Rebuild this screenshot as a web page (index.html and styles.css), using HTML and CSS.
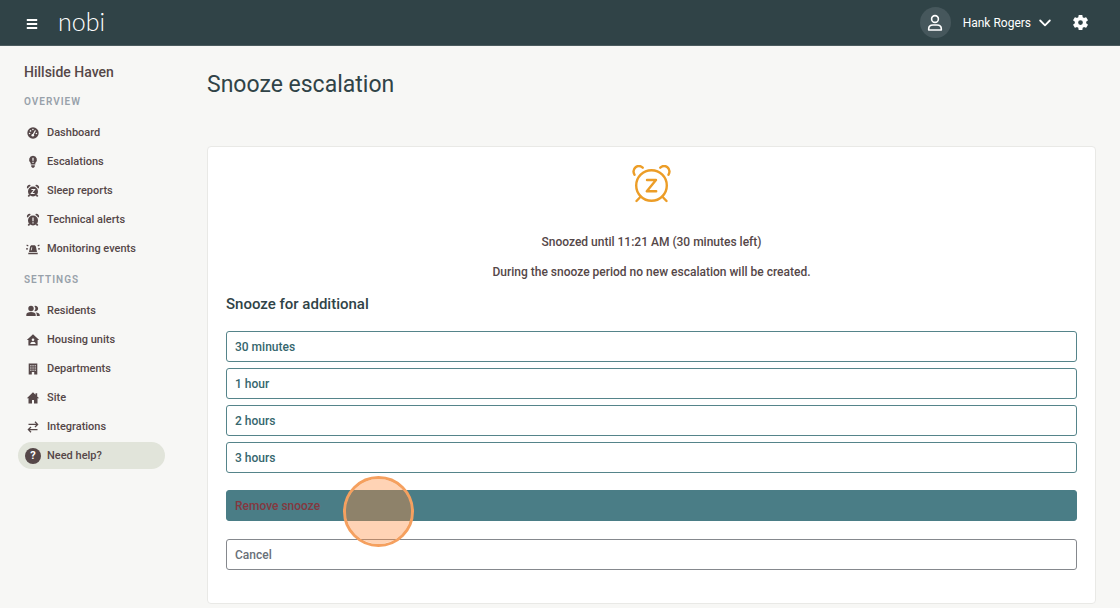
FILE: index.html
```html
<!DOCTYPE html>
<html lang="en">
<head>
<meta charset="utf-8">
<meta name="viewport" content="width=device-width, initial-scale=1">
<title>Snooze escalation – nobi</title>
<link rel="stylesheet" href="styles.css">
</head>
<body>
<header class="topbar">
  <button class="icon-button menu" type="button" aria-label="Menu">
    <svg width="12" height="12" viewBox="0 0 12 12" fill="none" stroke="currentColor" stroke-width="2"><path d="M.8 2h10.400M.8 6h10.400M.8 10h10.400"/></svg>
  </button>
  <a class="logo" href="#">nobi</a>
  <button class="user" type="button">
    <span class="avatar">
      <svg width="16" height="18" viewBox="0 0 16 18" fill="none" stroke="currentColor" stroke-width="1.600" stroke-linejoin="round"><circle cx="8" cy="5" r="3.400"/><path d="M1.700 16v-1.200C1.700 12.300 3.700 11 6 11h4c2.300 0 4.300 1.300 4.300 3.800V16z"/></svg>
    </span>
    <span>Hank Rogers</span>
    <svg class="chevron" width="12" height="8" viewBox="0 0 12 8" fill="none" stroke="currentColor" stroke-width="1.800" stroke-linecap="round" stroke-linejoin="round"><path d="M1.200 1.500 6 6.300l4.800-4.800"/></svg>
  </button>
  <button class="icon-button" type="button" aria-label="Settings">
    <svg width="19" height="19" viewBox="0 0 24 24" fill="currentColor"><path d="M19.140 12.940c.04-.3.06-.61.06-.94s-.02-.64-.07-.94l2.030-1.580a.49.490 0 0 0 .12-.61l-1.920-3.320a.49.490 0 0 0-.59-.22l-2.390.96a7 7 0 0 0-1.620-.94l-.36-2.540a.48.480 0 0 0-.48-.41h-3.840a.48.480 0 0 0-.47.410l-.36 2.540c-.59.240-1.130.570-1.620.940l-2.390-.96a.49.490 0 0 0-.59.220L2.740 8.870a.49.490 0 0 0 .12.610l2.030 1.580a6 6 0 0 0 0 1.880l-2.030 1.580a.49.490 0 0 0-.12.610l1.920 3.320c.12.220.370.290.590.220l2.390-.96c.5.380 1.030.700 1.620.940l.36 2.540c.05.240.240.410.480.410h3.840c.24 0 .44-.17.470-.41l.36-2.540c.59-.24 1.130-.56 1.620-.94l2.390.960c.22.080.470 0 .59-.22l1.920-3.320a.49.490 0 0 0-.12-.61zM12 15a3 3 0 1 1 0-6 3 3 0 0 1 0 6z"/></svg>
  </button>
</header>
<div class="shell">
  <nav class="sidebar" aria-label="Main">
    <p class="site-name">Hillside Haven</p>
    <h2 class="group-title">OVERVIEW</h2>
    <ul class="nav-list">
      <li><a class="nav-link" href="#"><svg class="nav-icon" viewBox="0 0 14 14"><circle cx="7" cy="7" r="5.700" fill="currentColor"/><path d="M7 9 9.200 4.800" stroke="#f7f7f5" stroke-width="1.200" stroke-linecap="round"/><g fill="#f7f7f5"><circle cx="6.800" cy="9.300" r="1.300"/><circle cx="3.600" cy="7.500" r=".8"/><circle cx="4.500" cy="4.900" r=".8"/><circle cx="6.900" cy="3.500" r=".8"/><circle cx="10.400" cy="7.500" r=".8"/></g></svg>Dashboard</a></li>
      <li><a class="nav-link" href="#"><svg class="nav-icon" viewBox="0 0 14 14"><path fill="currentColor" d="M7 .8a4 4 0 0 0-2.300 7.200V9.500h4.600V8A4 4 0 0 0 7 .8zM5.200 10.200h3.600v1.200l-1 1.300H6.200l-1-1.300z"/><path d="M7 2.800v3M7 6.800v1.200" stroke="#f7f7f5" stroke-width="1.200"/></svg>Escalations</a></li>
      <li><a class="nav-link" href="#"><svg class="nav-icon" viewBox="0 0 14 14"><circle cx="7" cy="7.500" r="5" fill="currentColor"/><path d="M1.800 4.200C1.300 2.300 2.800 1.300 4.300 1.900M12.200 4.200C12.700 2.300 11.200 1.300 9.700 1.900M3.500 10.900 2.300 12.600M10.500 10.900 11.700 12.600" fill="none" stroke="currentColor" stroke-width="1.700"/><path d="M5.400 5.500h3.200L5.400 9.500h3.200" fill="none" stroke="#f7f7f5" stroke-width="1.100"/></svg>Sleep reports</a></li>
      <li><a class="nav-link" href="#"><svg class="nav-icon" viewBox="0 0 14 14"><circle cx="7" cy="7.500" r="5" fill="currentColor"/><path d="M1.800 4.200C1.300 2.300 2.800 1.300 4.300 1.900M12.200 4.200C12.700 2.300 11.200 1.300 9.700 1.900M3.500 10.900 2.300 12.600M10.500 10.900 11.700 12.600" fill="none" stroke="currentColor" stroke-width="1.700"/><path d="M7 4.500v3.800M7 9.300v1.300" stroke="#f7f7f5" stroke-width="1.200"/></svg>Technical alerts</a></li>
      <li><a class="nav-link" href="#"><svg class="nav-icon" viewBox="0 0 14 14"><path fill="currentColor" d="M3 10 4 5c.2-1.200.9-1.800 2-1.800h2c1.100 0 1.800.6 2 1.800l1 5zM2.300 10.700h9.400v1.500H2.300z"/><path d="M5.300 8.300l.5-3" stroke="#f7f7f5" stroke-width=".8"/><path d="M.6 3l1.700 1M0 6.800h2M13.400 3l-1.700 1M14 6.800h-2" stroke="currentColor" stroke-width="1.200"/></svg>Monitoring events</a></li>
    </ul>
    <h2 class="group-title">SETTINGS</h2>
    <ul class="nav-list">
      <li><a class="nav-link" href="#"><svg class="nav-icon" viewBox="0 0 14 14" fill="currentColor"><circle cx="5" cy="4.500" r="2.700"/><path d="M.3 12v-1.200C.3 9 2.200 8.100 5 8.100s4.700.9 4.700 2.700V12zM8.300 6.900a3.600 3.600 0 0 0 0-4.900 2.700 2.700 0 1 1 0 4.900zM10.800 12v-1.200c0-1-.4-1.800-1.100-2.400 2.500.1 4 .9 4 2.400V12z"/></svg>Residents</a></li>
      <li><a class="nav-link" href="#"><svg class="nav-icon" viewBox="0 0 14 14"><path fill="currentColor" d="M7 1.200.8 6.900h1.600v5.600h9.200V6.900h1.600z"/><circle cx="7" cy="6.700" r="1.300" fill="#f7f7f5"/><path d="M4.300 11c0-3 5.400-3 5.400 0z" fill="#f7f7f5"/></svg>Housing units</a></li>
      <li><a class="nav-link" href="#"><svg class="nav-icon" viewBox="0 0 14 14"><path fill="currentColor" d="M2.700 1.500h8.600v11H8.200v-2.400H5.800v2.400H2.700z"/><path d="M4.200 3.800h1.300m.9 0h1.300m.9 0h1.300M4.200 6h1.300m.9 0h1.300m.9 0h1.300M4.200 8.200h1.300m.9 0h1.300m.9 0h1.300" stroke="#f7f7f5" stroke-width="1"/></svg>Departments</a></li>
      <li><a class="nav-link" href="#"><svg class="nav-icon" viewBox="0 0 14 14"><path fill="currentColor" d="M7 1.300.8 7.300h1.700v5.200H6V8.900h2v3.600h3.500V7.300h1.700l-2-1.900V2.300H9.500v1.400z"/></svg>Site</a></li>
      <li><a class="nav-link" href="#"><svg class="nav-icon" viewBox="0 0 14 14" fill="none" stroke="currentColor" stroke-width="1.300"><path d="M2.500 4.400h8.500M9 1.800l2.600 2.600L9 7M11.500 9.600H3M5 7 2.400 9.600 5 12.200"/></svg>Integrations</a></li>
      <li><a class="nav-link help" href="#"><span class="help-mark" aria-hidden="true">?</span>Need help?</a></li>
    </ul>
  </nav>
  <main class="content">
    <h1 class="page-title">Snooze escalation</h1>
    <section class="card">
      <svg class="alarm" width="40" height="40" viewBox="0 0 40 40" fill="none" stroke="currentColor" stroke-width="2.400" stroke-linecap="round" stroke-linejoin="round"><circle cx="19.500" cy="20.500" r="15.300"/><path d="M15 15h9L14.800 26.200h9.400M2.500 9.800C-.8 3.300 6-1.500 10.700 2.700M36.500 9.800C39.800 3.300 33-1.500 28.300 2.700M8.800 31.500 4.500 36M30.200 31.500l4.300 4.500"/></svg>
      <p class="status">Snoozed until 11:21 AM (30 minutes left)</p>
      <p class="status">During the snooze period no new escalation will be created.</p>
      <h2 class="card-title">Snooze for additional</h2>
      <div class="options">
        <button class="option" type="button">30 minutes</button>
        <button class="option" type="button">1 hour</button>
        <button class="option" type="button">2 hours</button>
        <button class="option" type="button">3 hours</button>
      </div>
      <div class="remove-row">
        <button class="option remove" type="button">Remove snooze</button>
        <span class="click-marker"></span>
      </div>
      <button class="option cancel" type="button">Cancel</button>
    </section>
  </main>
</div>
</body>
</html>
```
FILE: styles.css
```css
* { box-sizing: border-box; }
body {
  margin: 0;
  background: #f7f7f5;
  color: #554748;
  font-family: "Roboto", "Liberation Sans", sans-serif;
  font-size: 11px;
}
button { font: inherit; cursor: pointer; }
p, h1, h2, ul { margin: 0; padding: 0; }
ul { list-style: none; }
svg { display: block; flex: none; }

.topbar {
  display: flex;
  align-items: center;
  height: 46px;
  padding: 0 30px 0 24px;
  background: #304347;
  border-bottom: 1px solid #4c5c5f;
  color: #fff;
}
.icon-button {
  padding: 0;
  border: 0;
  background: none;
  color: inherit;
}
.menu { padding: 2px 2px 0; }
.logo {
  margin: 0 auto 0 18px;
  padding-bottom: 4px;
  color: #fff;
  font-family: "Lato", sans-serif;
  font-size: 25px;
  font-weight: 300;
  line-height: 32px;
  text-decoration: none;
}
.user {
  display: flex;
  align-items: center;
  gap: 12px;
  margin-right: 20px;
  padding: 0;
  border: 0;
  background: none;
  color: #fff;
  font-size: 12px;
}
.avatar {
  display: grid;
  place-items: center;
  width: 31px;
  height: 31px;
  border-radius: 50%;
  background: #46575c;
}
.chevron { margin-left: -4px; }

.shell {
  display: grid;
  grid-template-columns: 183px minmax(0, 1fr);
}
.sidebar { padding: 16px 18px; }
.site-name {
  padding-left: 6px;
  font-size: 14px;
  font-weight: 500;
  line-height: 20px;
}
.group-title {
  padding-left: 6px;
  color: #98a1aa;
  font-size: 10px;
  font-weight: 600;
  letter-spacing: 1px;
  line-height: 16px;
  margin: 12px 0 9px;
}
.nav-list { display: grid; gap: 2px; }
.nav-list + .group-title { margin: 10px 0 9px; }
.nav-link {
  display: flex;
  align-items: center;
  gap: 7px;
  height: 27px;
  padding-left: 8px;
  border-radius: 14px;
  color: #554748;
  font-weight: 500;
  text-decoration: none;
}
.nav-icon { width: 14px; height: 14px; }
.help { padding-left: 7px; gap: 6px; background: #e1e4da; }
.help-mark {
  display: grid;
  place-items: center;
  width: 16px;
  height: 16px;
  border-radius: 50%;
  background: #554748;
  color: #fff;
  font-weight: 700;
}

.content { padding: 23px 24px 4px; }
.page-title {
  color: #304347;
  font-size: 23px;
  font-weight: 400;
  line-height: 32px;
}
.card {
  margin-top: 45px;
  padding: 18px 18px 33px;
  border: 1px solid #e9e9e6;
  border-radius: 4px;
  background: #fff;
}
.alarm { margin: 0 auto 27px; color: #ec9d27; }
.status {
  margin-bottom: 10px;
  font-size: 12px;
  font-weight: 500;
  line-height: 20px;
  text-align: center;
}
.card-title {
  margin: 10px 0 15px;
  color: #304347;
  font-size: 15px;
  font-weight: 500;
  line-height: 24px;
}
.options { display: grid; gap: 6px; }
.option {
  display: block;
  width: 100%;
  height: 31px;
  padding: 0 8px;
  border: 1px solid #55848a;
  border-radius: 3px;
  background: #fff;
  color: #35666d;
  font-size: 12px;
  font-weight: 500;
  text-align: left;
}
.remove-row { position: relative; margin: 17px 0 18px; }
.remove { background: #4a7d86; border-color: #4a7d86; color: #84383f; }
.cancel { border-color: #85888d; color: #697078; }
.click-marker {
  position: absolute;
  left: 117px;
  top: -14px;
  width: 71px;
  height: 71px;
  border: 3px solid #f5a05f;
  border-radius: 50%;
  background: rgba(255, 140, 60, .38);
  background-clip: padding-box;
  pointer-events: none;
}
```
